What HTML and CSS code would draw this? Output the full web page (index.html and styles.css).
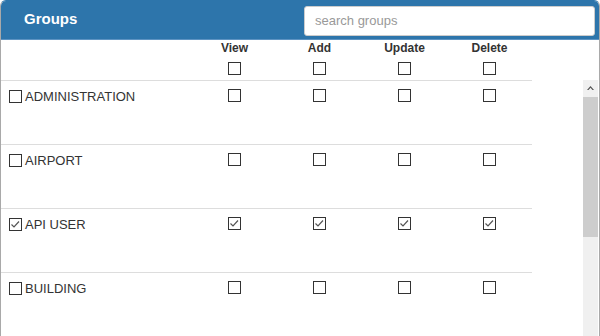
FILE: index.html
```html
<!DOCTYPE html>
<html lang="en">
<head>
  <meta charset="UTF-8">
  <title>Groups</title>
  <link rel="stylesheet" href="styles.css">
</head>
<body>
  <div class="panel">
    <!-- Title bar -->
    <div class="panel-head">
      <h2>Groups</h2>
      <input class="search" type="text" placeholder="search groups">
    </div>

    <!-- Column titles -->
    <div class="grid cols">
      <div></div>
      <div class="col"><span>View</span><span class="box"></span></div>
      <div class="col"><span>Add</span><span class="box"></span></div>
      <div class="col"><span>Update</span><span class="box"></span></div>
      <div class="col"><span>Delete</span><span class="box"></span></div>
    </div>

    <div class="body">
      <div class="rows">
        <div class="grid row">
          <label class="name"><span class="box"></span>ADMINISTRATION</label>
          <div class="cell"><span class="box"></span></div>
          <div class="cell"><span class="box"></span></div>
          <div class="cell"><span class="box"></span></div>
          <div class="cell"><span class="box"></span></div>
        </div>
        <div class="grid row">
          <label class="name"><span class="box"></span>AIRPORT</label>
          <div class="cell"><span class="box"></span></div>
          <div class="cell"><span class="box"></span></div>
          <div class="cell"><span class="box"></span></div>
          <div class="cell"><span class="box"></span></div>
        </div>
        <div class="grid row">
          <label class="name"><span class="box"><svg viewBox="0 0 11 11"><polyline points="1.5,5.5 4,8 9,2.5"/></svg></span>API USER</label>
          <div class="cell"><span class="box"><svg viewBox="0 0 11 11"><polyline points="1.5,5.5 4,8 9,2.5"/></svg></span></div>
          <div class="cell"><span class="box"><svg viewBox="0 0 11 11"><polyline points="1.5,5.5 4,8 9,2.5"/></svg></span></div>
          <div class="cell"><span class="box"><svg viewBox="0 0 11 11"><polyline points="1.5,5.5 4,8 9,2.5"/></svg></span></div>
          <div class="cell"><span class="box"><svg viewBox="0 0 11 11"><polyline points="1.5,5.5 4,8 9,2.5"/></svg></span></div>
        </div>
        <div class="grid row">
          <label class="name"><span class="box"></span>BUILDING</label>
          <div class="cell"><span class="box"></span></div>
          <div class="cell"><span class="box"></span></div>
          <div class="cell"><span class="box"></span></div>
          <div class="cell"><span class="box"></span></div>
        </div>
      </div>

      <!-- scrollbar -->
      <div class="scrollbar">
        <div class="scroll-btn">
          <svg width="7" height="4" viewBox="0 0 7 4"><polygon points="0,4 3.5,0 7,4 5.5,4 3.5,1.8 1.5,4"/></svg>
        </div>
        <div class="scroll-thumb"></div>
      </div>
    </div>
  </div>
</body>
</html>
```

FILE: styles.css
```css
* {
  margin: 0;
  padding: 0;
  box-sizing: border-box;
  font-family: "Liberation Sans", Arial, sans-serif;
}
body {
  background: #fff;
}
.panel {
  height: 100vh;
  display: flex;
  flex-direction: column;
  border: 1px solid #a9a9a9;
  border-top-color: #2d75ab;
  border-bottom: none;
  border-radius: 6px 6px 0 0;
  overflow: hidden;
}
.panel-head {
  display: flex;
  align-items: center;
  justify-content: space-between;
  height: 39px;
  padding: 0 4px 0 23px;
  background: #2d75ab;
  border-bottom: 1px solid #5d93c2;
  flex-shrink: 0;
}
.panel-head h2 {
  color: #fff;
  font-size: 15px;
  font-weight: bold;
  margin-top: -4px;
}
.search {
  width: 291px;
  height: 30px;
  margin-top: 1px;
  padding: 0 10px;
  border: 1px solid #ccc;
  border-radius: 3px;
  font-size: 13px;
  color: #333;
  outline: none;
}
.search::placeholder {
  color: #999;
}
.grid {
  display: grid;
  grid-template-columns: 191px repeat(4, 85px);
  width: 531px;
}
.cols {
  height: 40px;
  flex-shrink: 0;
}
.col {
  display: flex;
  flex-direction: column;
  align-items: center;
  gap: 7px;
  padding-top: 1px;
  font-size: 12px;
  font-weight: bold;
  color: #333;
  line-height: 14px;
}
.col .box {
  margin-left: -1px;
}
.box {
  display: inline-flex;
  width: 13px;
  height: 13px;
  border: 1px solid #333;
  background: #fff;
  flex-shrink: 0;
}
.box svg {
  width: 11px;
  height: 11px;
  fill: none;
  stroke: #555;
  stroke-width: 1.2;
}
.body {
  flex: 1;
  display: flex;
  justify-content: space-between;
  overflow: hidden;
}
.rows {
  width: 531px;
}
.row {
  height: 64px;
  border-top: 1px solid #ddd;
}
.name {
  display: flex;
  align-items: center;
  gap: 3px;
  height: 13px;
  margin-top: 9px;
  padding-left: 8px;
  font-size: 13px;
  color: #333;
}
.cell {
  display: flex;
  justify-content: center;
  padding-top: 8px;
}
.scrollbar {
  width: 15px;
  margin-right: 1px;
  background: #f0f0f0;
  display: flex;
  flex-direction: column;
}
.scroll-btn {
  height: 17px;
  display: flex;
  align-items: center;
  justify-content: center;
  padding-bottom: 2px;
}
.scroll-btn svg {
  fill: #505050;
}
.scroll-thumb {
  height: 140px;
  background: #cdcdcd;
}
```
